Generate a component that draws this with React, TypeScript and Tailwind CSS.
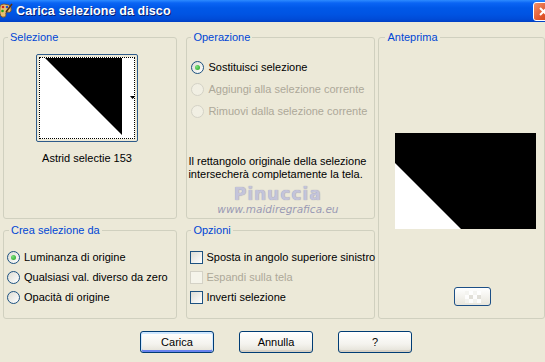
import React from 'react';

const groupCls =
  'border border-[#D0D0BF] rounded-[3px] m-0 p-0 min-w-0 relative';
const legendCls = 'ml-[4px] px-[2px] leading-[13px] text-[#0046D5]';

interface RadioProps {
  label: string;
  checked?: boolean;
  disabled?: boolean;
  rowClass: string;
}

const Radio: React.FC<RadioProps> = ({ label, checked, disabled, rowClass }) => (
  <div className={`flex items-center ${rowClass}`}>
    <span
      className={`w-[13px] h-[13px] shrink-0 rounded-full border flex items-center justify-center ${
        disabled
          ? 'border-[#D4D2C6] bg-[#F1EFE3]'
          : 'border-[#1C5180] bg-[linear-gradient(135deg,#DCDCD4,#FFFFFF)]'
      }`}
    >
      {checked && (
        <span className="w-[5px] h-[5px] rounded-full bg-[radial-gradient(circle_at_35%_35%,#7BE07B,#21A121)]" />
      )}
    </span>
    <span className={`ml-[4px] whitespace-nowrap ${disabled ? 'text-[#ACA899]' : 'text-black'}`}>
      {label}
    </span>
  </div>
);

interface CheckProps {
  label: string;
  disabled?: boolean;
}

const Check: React.FC<CheckProps> = ({ label, disabled }) => (
  <div className="flex items-center h-[20px]">
    <span
      className={`w-[13px] h-[13px] shrink-0 border ${
        disabled
          ? 'border-[#D4D2C6] bg-[#F5F4EA]'
          : 'border-[#1C5180] bg-[linear-gradient(135deg,#DCDCD4,#FFFFFF)]'
      }`}
    />
    <span className={`ml-[3px] whitespace-nowrap ${disabled ? 'text-[#ACA899]' : 'text-black'}`}>
      {label}
    </span>
  </div>
);

const PushButton: React.FC<{ label: string; isDefault?: boolean }> = ({ label, isDefault }) => (
  <button
    className={`w-[74px] h-[22px] rounded-[3px] border border-[#003C74] text-black bg-[linear-gradient(to_bottom,#FFFFFF,#F4F3EE_60%,#E3E0D6)] ${
      isDefault
        ? 'shadow-[inset_0_1px_0_1px_#CEE7FF,inset_0_-1px_0_1px_#6982EE]'
        : 'shadow-[inset_0_-2px_0_0_#D6D0C5]'
    }`}
  >
    {label}
  </button>
);

const PaletteIcon = () => (
  <svg width="14" height="16" viewBox="0 0 14 16" className="shrink-0">
    <path d="M1 4 Q1 1 5 1 L10 2 Q13 4 12 8 Q11 10 8 9 Q6 9 7 12 Q7 15 3 14 Q0 12 1 4 Z" fill="#E8C070" stroke="#7A4A1A" strokeWidth="0.8" />
    <circle cx="4" cy="4" r="1.3" fill="#D02020" />
    <circle cx="8" cy="4" r="1.3" fill="#2050D0" />
    <circle cx="3.5" cy="8" r="1.3" fill="#20A020" />
    <path d="M13 1 L7 9" stroke="#5A3010" strokeWidth="1.6" />
  </svg>
);

const App: React.FC = () => {
  return (
    <div className="w-[545px] h-[362px] overflow-hidden bg-[#ECE9D8] text-[11px] font-['Liberation_Sans',Arial,sans-serif]">
      {/* Title bar */}
      <div className="h-[22px] flex items-center bg-[linear-gradient(to_bottom,#2D8BFF_0px,#0A64F4_3px,#0058E8_8px,#0054E3_14px,#004CD8_19px,#003FC4_22px)]">
        <div className="w-[14px] flex items-center -ml-[1px]">
          <PaletteIcon />
        </div>
        <span className="ml-[3px] text-white font-bold text-[12.5px] tracking-[0.1px] [text-shadow:1px_1px_0_#0A1E6E] whitespace-nowrap">
          Carica selezione da disco
        </span>
        <div className="flex-1" />
        <div className="w-[21px] h-[19px] mt-[1px] -mr-[9px] rounded-[3px] border border-white bg-[linear-gradient(135deg,#F0906A,#E0542A_60%,#C8401C)] flex items-center justify-center">
          <svg width="9" height="9" viewBox="0 0 9 9">
            <path d="M1 1 L8 8 M8 1 L1 8" stroke="#fff" strokeWidth="2" />
          </svg>
        </div>
      </div>

      {/* Body */}
      <div className="flex pt-[9px] pl-[3px]">
        {/* Left column */}
        <div className="w-[178px] flex flex-col gap-[5px]">
          <fieldset className={`${groupCls} h-[188px]`}>
            <legend className={legendCls}>Selezione</legend>
            <div className="ml-[32px] mt-[10px] w-[102px] h-[88px] rounded-[2px] border border-[#2E5B8A] p-[2px] bg-[#ECE9D8]">
              <div className="w-full h-full border border-dotted border-black bg-white">
                <svg width="94" height="80" viewBox="0 0 94 80" className="block">
                  <polygon points="5,0 82,0 82,77" fill="#000" />
                  <polygon points="90,38 95,38 92.5,41" fill="#000" />
                </svg>
              </div>
            </div>
            <div className="mt-[8px] ml-[32px] w-[102px] text-center text-black whitespace-nowrap">
              Astrid selectie 153
            </div>
          </fieldset>

          <fieldset className={`${groupCls} h-[95px]`}>
            <legend className={`${legendCls} ml-[5px]`}>Crea selezione da</legend>
            <div className="ml-[3px] mt-[10px]">
              <Radio label="Luminanza di origine" checked rowClass="h-[20px]" />
              <Radio label="Qualsiasi val. diverso da zero" rowClass="h-[20px]" />
              <Radio label="Opacità di origine" rowClass="h-[20px]" />
            </div>
          </fieldset>
        </div>

        {/* Middle column */}
        <div className="w-[189px] ml-[9px] flex flex-col gap-[5px]">
          <fieldset className={`${groupCls} h-[188px]`}>
            <legend className={legendCls}>Operazione</legend>
            <div className="ml-[4px] mt-[12px]">
              <Radio label="Sostituisci selezione" checked rowClass="h-[22px]" />
              <Radio label="Aggiungi alla selezione corrente" disabled rowClass="h-[22px]" />
              <Radio label="Rimuovi dalla selezione corrente" disabled rowClass="h-[22px]" />
            </div>
            <p className="ml-[1px] mt-[33px] leading-[13px] text-black whitespace-nowrap">
              Il rettangolo originale della selezione
              <br />
              intersecherà completamente la tela.
            </p>
            <div className="mt-[4px] flex flex-col items-center pr-[6px]">
              <span className="font-['DejaVu_Sans',sans-serif] font-bold text-[17px] leading-[18px] tracking-[1px] text-[#C4C4DA] [text-shadow:0_0_1px_#8A8AAA]">
                Pinuccia
              </span>
              <span className="font-['DejaVu_Sans',sans-serif] italic text-[10.5px] leading-[13px] text-[#9A9AB4]">
                www.maidiregrafica.eu
              </span>
            </div>
          </fieldset>

          <fieldset className={`${groupCls} h-[95px]`}>
            <legend className={legendCls}>Opzioni</legend>
            <div className="ml-[3px] mt-[10px]">
              <Check label="Sposta in angolo superiore sinistro" />
              <Check label="Espandi sulla tela" disabled />
              <Check label="Inverti selezione" />
            </div>
          </fieldset>
        </div>

        {/* Right column */}
        <div className="w-[170px] ml-[3px]">
          <fieldset className={`${groupCls} h-[288px]`}>
            <legend className={`${legendCls} ml-[6px]`}>Anteprima</legend>
            <div className="ml-[16px] mt-[89px] w-[141px] h-[96px] bg-black">
              <svg width="141" height="96" viewBox="0 0 141 96" className="block">
                <polygon points="0,30 66,96 0,96" fill="#fff" />
              </svg>
            </div>
            <div className="ml-[75px] mt-[58px] w-[37px] h-[19px] rounded-[3px] border border-[#1C4F86] bg-[linear-gradient(to_bottom,#FFFFFF,#E8E6DC)] flex items-center justify-center">
              <div className="grid grid-cols-[repeat(4,4px)] grid-rows-[repeat(3,4px)] opacity-90">
                <span className="bg-[#F4F4F0]" />
                <span className="bg-white" />
                <span className="bg-[#F4F4F0]" />
                <span className="bg-white" />
                <span className="bg-white" />
                <span className="bg-[#E0DED6]" />
                <span className="bg-white" />
                <span className="bg-[#E0DED6]" />
                <span className="bg-[#F4F4F0]" />
                <span className="bg-white" />
                <span className="bg-[#F4F4F0]" />
                <span className="bg-white" />
              </div>
            </div>
          </fieldset>
        </div>
      </div>

      {/* Buttons */}
      <div className="flex gap-[25px] pl-[140px] mt-[12px]">
        <PushButton label="Carica" isDefault />
        <PushButton label="Annulla" />
        <PushButton label="?" />
      </div>
    </div>
  );
};

export default App;
